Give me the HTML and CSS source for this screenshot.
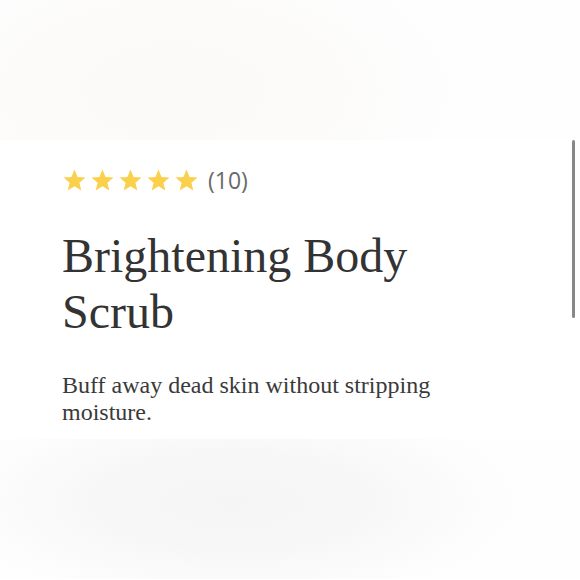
FILE: index.html
```html
<!DOCTYPE html>
<html lang="en">

<head>
    <meta charset="UTF-8">
    <meta name="viewport" content="width=device-width, initial-scale=1.0">
    <title>Brightening Body Scrub</title>
    <link rel="stylesheet" href="styles.css">
</head>

<body>
    <div class="hero"></div>

    <div class="product-info">
        <div class="rating">
            <div class="stars">
                <svg class="star" viewBox="0 0 24 24"><polygon points="12,1.5 14.9,8.6 22.5,9.2 16.7,14.2 18.5,21.7 12,17.6 5.5,21.7 7.3,14.2 1.5,9.2 9.1,8.6"/></svg>
                <svg class="star" viewBox="0 0 24 24"><polygon points="12,1.5 14.9,8.6 22.5,9.2 16.7,14.2 18.5,21.7 12,17.6 5.5,21.7 7.3,14.2 1.5,9.2 9.1,8.6"/></svg>
                <svg class="star" viewBox="0 0 24 24"><polygon points="12,1.5 14.9,8.6 22.5,9.2 16.7,14.2 18.5,21.7 12,17.6 5.5,21.7 7.3,14.2 1.5,9.2 9.1,8.6"/></svg>
                <svg class="star" viewBox="0 0 24 24"><polygon points="12,1.5 14.9,8.6 22.5,9.2 16.7,14.2 18.5,21.7 12,17.6 5.5,21.7 7.3,14.2 1.5,9.2 9.1,8.6"/></svg>
                <svg class="star" viewBox="0 0 24 24"><polygon points="12,1.5 14.9,8.6 22.5,9.2 16.7,14.2 18.5,21.7 12,17.6 5.5,21.7 7.3,14.2 1.5,9.2 9.1,8.6"/></svg>
            </div>
            <span class="count">(10)</span>
        </div>
        <h1 class="title">Brightening Body Scrub</h1>
        <p class="desc">Buff away dead skin without stripping moisture.</p>
    </div>

    <div class="gallery"></div>

    <div class="scrollbar"></div>
</body>

</html>
```

FILE: styles.css
```css
body {
    margin: 0;
    background-color: white;
    font-family: "Liberation Serif", serif;
    color: #333;
}

.hero {
    height: 140px;
    background-color: #fefefe;
    background-image: radial-gradient(ellipse 50% 110% at 30% 65%, #fbfaf9 0%, #fcfbfa 55%, rgba(254, 254, 254, 0) 100%);
}

.product-info {
    padding: 28px 62px 13px;
}

.rating {
    display: flex;
    align-items: center;
    height: 24px;
}

.stars {
    display: flex;
    gap: 3px;
}

.star {
    width: 25px;
    height: 25px;
    fill: #fbd04c;
}

.count {
    margin-left: 9px;
    font-family: "Open Sans", sans-serif;
    font-size: 23px;
    color: #6a6a6a;
}

.title {
    margin: 36px 0 0;
    font-size: 48px;
    font-weight: normal;
    line-height: 56px;
    width: 380px;
    color: #333;
}

.desc {
    margin: 32px 0 0;
    font-size: 24px;
    line-height: 27px;
    width: 420px;
    color: #3a3a3a;
}

.gallery {
    height: 140px;
    background-color: #fefefe;
    background-image: radial-gradient(ellipse 50% 75% at 40% 45%, #f5f5f5 0%, #f7f7f7 45%, rgba(254, 254, 254, 0) 100%);
}

.scrollbar {
    position: absolute;
    top: 140px;
    left: 572px;
    width: 3px;
    height: 178px;
    border-radius: 2px;
    background-color: #888;
}
```
